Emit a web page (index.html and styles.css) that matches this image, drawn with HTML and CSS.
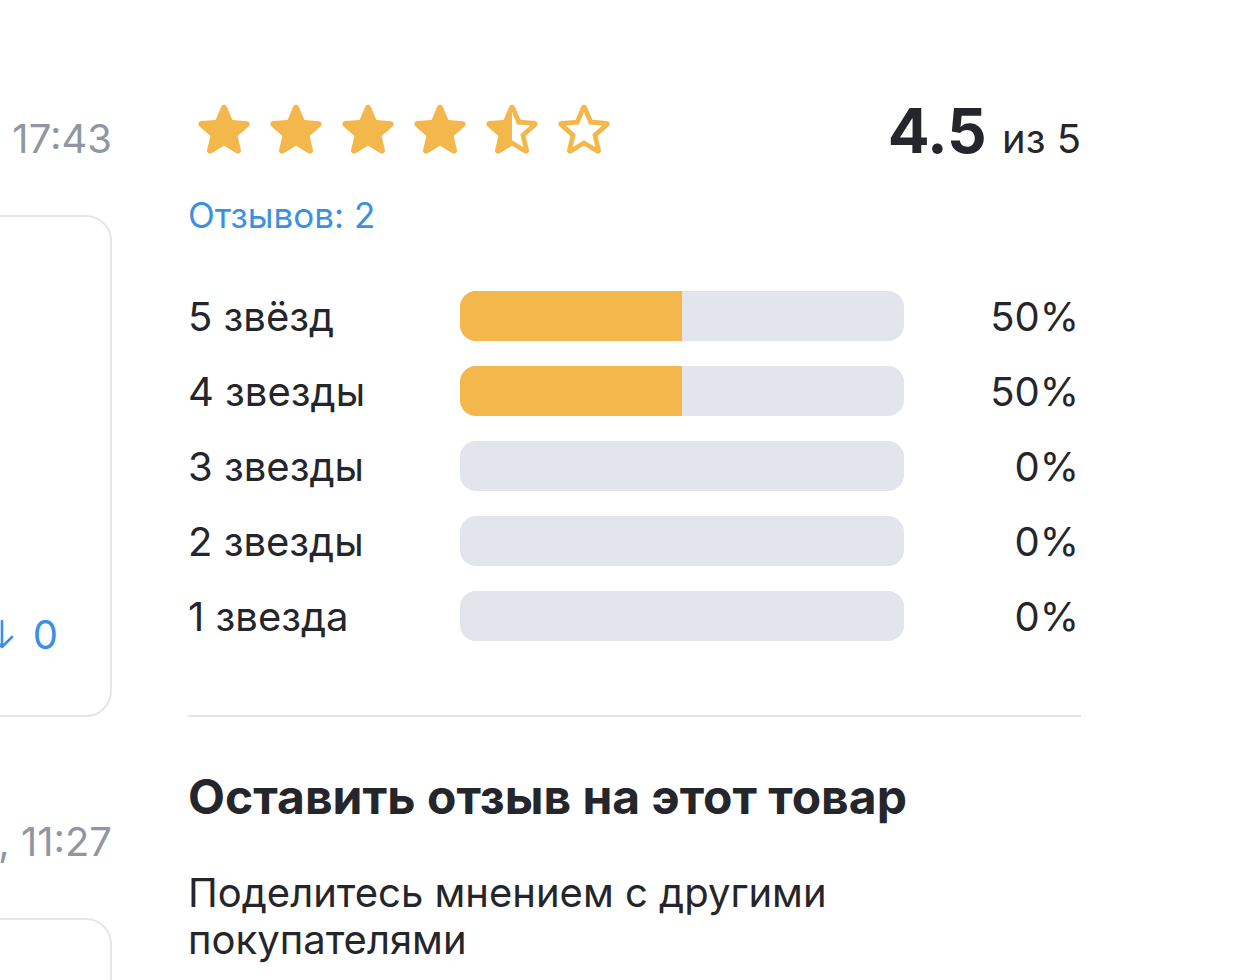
FILE: index.html
```html
<!DOCTYPE html>
<html lang="ru">
<head>
<meta charset="utf-8">
<title>Отзывы</title>
<link rel="stylesheet" href="styles.css">
</head>
<body>
<div class="page">
  <aside class="reviews">
    <div class="review-date">15 мая 2024, 17:43</div>
    <div class="review-card">
      <div class="votes">
        <span class="vote">
          <svg class="vote-icon" viewBox="0 0 24 30" width="24" height="30"><path d="M12 2v26M2 18l10 10 10-10" fill="none" stroke="currentColor" stroke-width="2.6" stroke-linecap="round" stroke-linejoin="round"/></svg>
          <span>0</span>
        </span>
      </div>
    </div>
    <div class="review-date second">12 мая 2024, 11:27</div>
    <div class="review-card short"></div>
  </aside>

  <section class="summary">
    <div class="summary-top">
      <div class="stars">
        <svg class="star" viewBox="0 0 24 24"><path d="M12 17.27l4.15 2.51c.76.46 1.69-.22 1.49-1.08l-1.1-4.72 3.67-3.18c.67-.58.31-1.68-.57-1.75l-4.83-.41-1.89-4.46c-.34-.81-1.5-.81-1.84 0L9.19 8.63l-4.83.41c-.88.07-1.24 1.17-.57 1.75l3.67 3.18-1.1 4.72c-.2.86.73 1.54 1.49 1.08l4.15-2.5z"/></svg>
        <svg class="star" viewBox="0 0 24 24"><path d="M12 17.27l4.15 2.51c.76.46 1.69-.22 1.49-1.08l-1.1-4.72 3.67-3.18c.67-.58.31-1.68-.57-1.75l-4.83-.41-1.89-4.46c-.34-.81-1.5-.81-1.84 0L9.19 8.63l-4.83.41c-.88.07-1.24 1.17-.57 1.75l3.67 3.18-1.1 4.72c-.2.86.73 1.54 1.49 1.08l4.15-2.5z"/></svg>
        <svg class="star" viewBox="0 0 24 24"><path d="M12 17.27l4.15 2.51c.76.46 1.69-.22 1.49-1.08l-1.1-4.72 3.67-3.18c.67-.58.31-1.68-.57-1.75l-4.83-.41-1.89-4.46c-.34-.81-1.5-.81-1.84 0L9.19 8.63l-4.83.41c-.88.07-1.24 1.17-.57 1.75l3.67 3.18-1.1 4.72c-.2.86.73 1.54 1.49 1.08l4.15-2.5z"/></svg>
        <svg class="star" viewBox="0 0 24 24"><path d="M12 17.27l4.15 2.51c.76.46 1.69-.22 1.49-1.08l-1.1-4.72 3.67-3.18c.67-.58.31-1.68-.57-1.75l-4.83-.41-1.89-4.46c-.34-.81-1.5-.81-1.84 0L9.19 8.63l-4.83.41c-.88.07-1.24 1.17-.57 1.75l3.67 3.18-1.1 4.72c-.2.86.73 1.54 1.49 1.08l4.15-2.5z"/></svg>
        <svg class="star" viewBox="0 0 24 24"><path d="M19.65 9.04l-4.84-.42-1.89-4.45c-.34-.81-1.5-.81-1.84 0L9.19 8.63l-4.83.41c-.88.07-1.24 1.17-.57 1.75l3.67 3.18-1.1 4.72c-.2.86.73 1.54 1.49 1.08l4.15-2.5 4.15 2.51c.76.46 1.69-.22 1.49-1.08l-1.1-4.73 3.67-3.18c.67-.58.32-1.68-.56-1.75zM12 15.4V6.1l1.71 4.04 4.38.38-3.32 2.88 1 4.28L12 15.4z"/></svg>
        <svg class="star" viewBox="0 0 24 24"><path d="M19.65 9.04l-4.84-.42-1.89-4.45c-.34-.81-1.5-.81-1.84 0L9.19 8.63l-4.83.41c-.88.07-1.24 1.17-.57 1.75l3.67 3.18-1.1 4.72c-.2.86.73 1.54 1.49 1.08l4.15-2.5 4.15 2.51c.76.46 1.69-.22 1.49-1.08l-1.1-4.73 3.67-3.18c.67-.58.32-1.68-.56-1.75zM12 15.4l-3.76 2.27 1-4.28-3.32-2.88 4.38-.38L12 6.1l1.71 4.04 4.38.38-3.32 2.88 1 4.28L12 15.4z"/></svg>
      </div>
      <div class="score"><span class="score-value">4.5</span><span class="score-max">из 5</span></div>
    </div>
    <a class="count" href="#">Отзывов: 2</a>

    <div class="dist">
      <div class="dist-row">
        <span class="dist-label">5 звёзд</span>
        <div class="track"><div class="fill" style="width:50%"></div></div>
        <span class="dist-pct">50%</span>
      </div>
      <div class="dist-row">
        <span class="dist-label">4 звезды</span>
        <div class="track"><div class="fill" style="width:50%"></div></div>
        <span class="dist-pct">50%</span>
      </div>
      <div class="dist-row">
        <span class="dist-label">3 звезды</span>
        <div class="track"><div class="fill" style="width:0%"></div></div>
        <span class="dist-pct">0%</span>
      </div>
      <div class="dist-row">
        <span class="dist-label">2 звезды</span>
        <div class="track"><div class="fill" style="width:0%"></div></div>
        <span class="dist-pct">0%</span>
      </div>
      <div class="dist-row">
        <span class="dist-label">1 звезда</span>
        <div class="track"><div class="fill" style="width:0%"></div></div>
        <span class="dist-pct">0%</span>
      </div>
    </div>

    <hr class="divider">

    <h2 class="leave-title">Оставить отзыв на этот товар</h2>
    <p class="leave-text">Поделитесь мнением с другими покупателями</p>
  </section>
</div>
</body>
</html>
```

FILE: styles.css
```css
* { box-sizing: border-box; }

html, body {
  margin: 0;
  padding: 0;
  background: #ffffff;
  overflow: hidden;
}

body {
  font-family: Inter, "Noto Sans", "DejaVu Sans", sans-serif;
  color: #24262b;
}

.page {
  display: flex;
  gap: 76px;
  margin-left: -488px;
  padding-top: 94px;
}

/* left column: review list (partially off-screen) */
.reviews {
  width: 600px;
  flex: none;
  display: flex;
  flex-direction: column;
}

.review-date {
  display: flex;
  justify-content: flex-end;
  white-space: nowrap;
  font-size: 40px;
  line-height: 48px;
  color: #9097a3;
  margin-top: 21px;
}

.review-date.second {
  margin-top: 101px;
}

.review-card {
  margin-top: 52px;
  height: 502px;
  border: 2px solid #e3e6ec;
  border-radius: 26px;
  display: flex;
  flex-direction: column;
  justify-content: flex-end;
  padding: 0 52px 56px 0;
}

.review-card.short {
  margin-top: 52px;
  height: 200px;
}

.votes {
  display: flex;
  justify-content: flex-end;
}

.vote {
  display: flex;
  align-items: center;
  gap: 19px;
  color: #3d8fe3;
  font-size: 40px;
  line-height: 48px;
}

.vote-icon {
  display: block;
  margin-top: -2px;
}

/* right column: summary */
.summary {
  width: 893px;
  flex: none;
}

.summary-top {
  display: flex;
  justify-content: space-between;
  align-items: flex-start;
  height: 72px;
}

.stars {
  display: flex;
}

.star {
  display: block;
  width: 72px;
  height: 72px;
  fill: #f4b74c;
}

.score {
  display: flex;
  align-items: baseline;
  gap: 16px;
  white-space: nowrap;
  margin-top: 6px;
}

.score-value {
  font-size: 62px;
  line-height: 1;
  font-weight: 700;
  letter-spacing: -0.5px;
}

.score-max {
  font-size: 40px;
  line-height: 1;
}

.count {
  display: inline-block;
  margin-top: 25px;
  font-size: 35px;
  line-height: 48px;
  color: #3d8fe3;
  text-decoration: none;
}

.dist {
  margin-top: 52px;
  display: flex;
  flex-direction: column;
  gap: 25px;
}

.dist-row {
  display: flex;
  align-items: center;
  height: 50px;
}

.dist-label {
  width: 272px;
  font-size: 40px;
}

.track {
  width: 444px;
  height: 50px;
  background: #e2e5ec;
  border-radius: 16px;
  overflow: hidden;
}

.fill {
  height: 100%;
  background: #f4b74c;
}

.dist-pct {
  flex: 1;
  text-align: right;
  font-size: 40px;
  padding-right: 2px;
}

.divider {
  margin: 74px 0 0;
  border: 0;
  height: 2px;
  background: #e3e6ea;
}

.leave-title {
  margin: 51px 0 0;
  font-size: 48px;
  line-height: 58px;
  font-weight: 700;
}

.leave-text {
  margin: 43px 0 0;
  max-width: 860px;
  font-size: 40px;
  line-height: 47px;
}
```
